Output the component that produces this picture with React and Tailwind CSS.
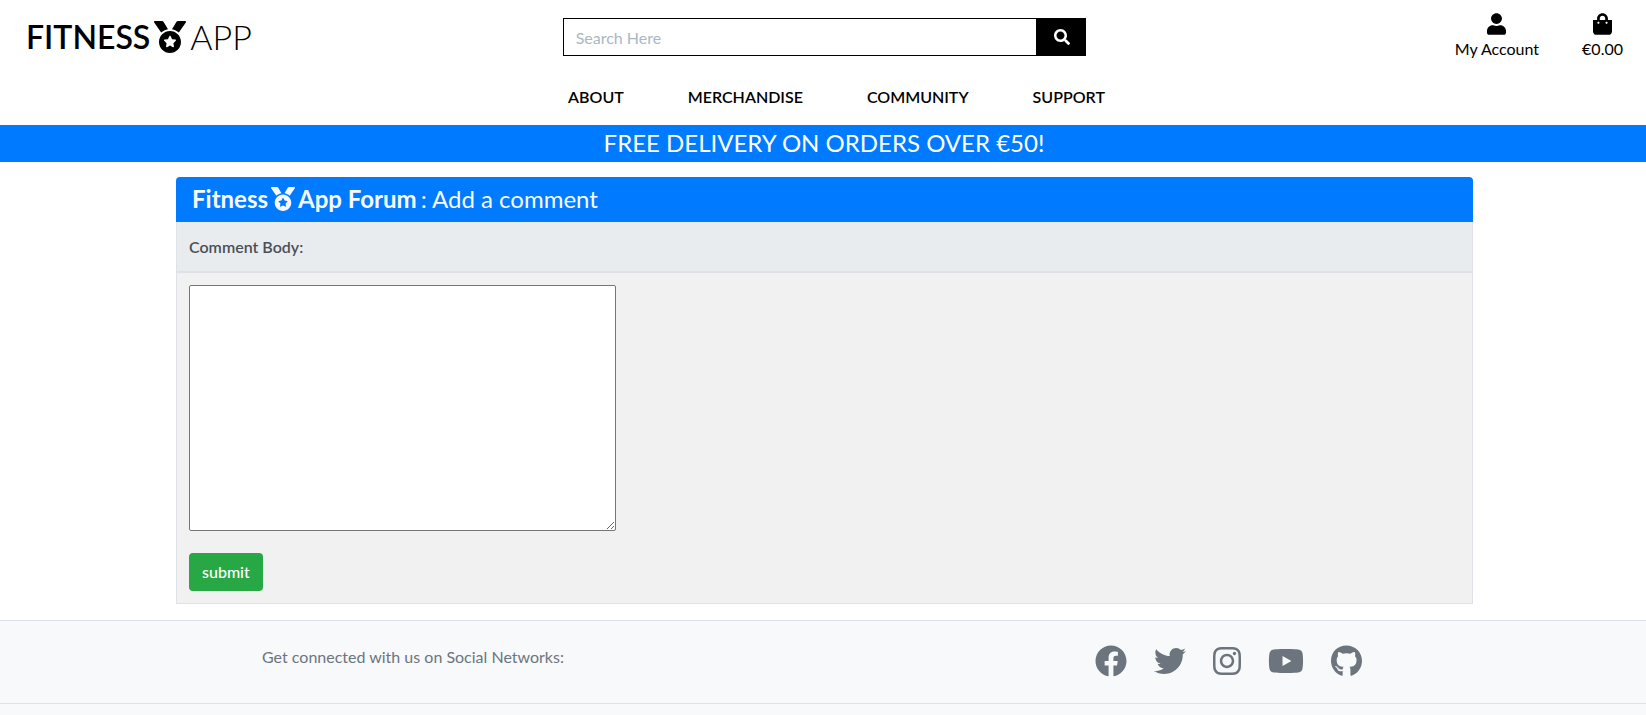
import {
  FaMedal,
  FaSearch,
  FaUser,
  FaShoppingBag,
  FaFacebook,
  FaTwitter,
  FaInstagram,
  FaYoutube,
  FaGithub,
} from "react-icons/fa";

const navItems = ["ABOUT", "MERCHANDISE", "COMMUNITY", "SUPPORT"];

const socials = [
  { label: "Facebook", Icon: FaFacebook, size: "w-8 h-8" },
  { label: "Twitter", Icon: FaTwitter, size: "w-8 h-8" },
  { label: "Instagram", Icon: FaInstagram, size: "w-7 h-8" },
  { label: "YouTube", Icon: FaYoutube, size: "w-9 h-8" },
  { label: "GitHub", Icon: FaGithub, size: "w-[31px] h-8" },
];

function Header() {
  return (
    <header className="text-black">
      <div className="grid grid-cols-3 items-start">
        <a href="#" className="flex items-center pl-[26px] pt-[14px] text-[32px] leading-[46px]">
          <span className="font-semibold">FITNESS</span>
          <FaMedal className="mx-1 size-8" />
          <span className="text-[34px] font-light">APP</span>
        </a>
        <form className="ml-[14px] mr-[11px] mt-[18px] flex h-[38px]" onSubmit={(e) => e.preventDefault()}>
          <input
            type="text"
            aria-label="Search"
            placeholder="Search Here"
            className="min-w-0 flex-1 border border-black px-3 pt-[2px] text-base outline-none placeholder:text-[#aab7c4]"
          />
          <button type="submit" aria-label="Search" className="flex w-[49px] items-center justify-center bg-black text-white">
            <FaSearch className="size-4" />
          </button>
        </form>
        <div className="flex justify-end gap-[43px] pr-[23px] pt-[13px] text-base leading-6">
          <a href="#" className="flex flex-col items-center">
            <FaUser className="h-[22px] w-[19px]" />
            <span className="pt-[2px]">My Account</span>
          </a>
          <a href="#" className="flex flex-col items-center">
            <FaShoppingBag className="h-[22px] w-[19px]" />
            <span className="pt-[2px]">€0.00</span>
          </a>
        </div>
      </div>
      <nav className="flex justify-center gap-16 pb-4 pl-[27px] pt-6 text-base font-semibold leading-6">
        {navItems.map((item) => (
          <a key={item} href="#">
            {item}
          </a>
        ))}
      </nav>
      <div className="bg-[#007bff] pb-[5px] pt-[3px] pl-[2px] text-center text-2xl leading-[29px] text-white">
        FREE DELIVERY ON ORDERS OVER €50!
      </div>
    </header>
  );
}

function CommentForm() {
  return (
    <main className="pb-4 pl-44 pr-[173px] pt-[15px]">
      <h1 className="flex items-center rounded-t bg-[#007bff] px-4 pb-px text-2xl leading-[44px] text-[#f8f9fa]">
        <span className="font-bold">Fitness</span>
        <FaMedal className="mx-[3px] size-6" />
        <span className="font-bold">App Forum</span>
        <span className="pl-1">: Add a comment</span>
      </h1>
      <form className="border border-t-0 border-[#dee2e6] bg-[#f1f1f1]" onSubmit={(e) => e.preventDefault()}>
        <div className="border-b-2 border-[#dee2e6] bg-[#e9ecef] p-3 pt-[13px] font-semibold leading-6 text-[#495057]">
          <label htmlFor="comment">Comment Body:</label>
        </div>
        <div className="flex flex-col items-start gap-[22px] p-3">
          <textarea id="comment" className="h-[246px] w-[427px] rounded-[2px] border border-[#767676] bg-white p-[2px]" />
          <button type="submit" className="rounded bg-[#28a745] px-[13px] py-[7px] text-base font-medium leading-6 text-white">
            submit
          </button>
        </div>
      </form>
    </main>
  );
}

function Footer() {
  return (
    <footer className="min-h-24 flex-1 border-t border-[#dee2e6] bg-[#f8f9fa] text-[#6c757d]">
      <div className="flex items-start justify-between border-b border-[#dee2e6] pb-[26px] pl-[262px] pr-[284px] pt-6">
        <span className="text-base leading-6">Get connected with us on Social Networks:</span>
        <div className="flex gap-[27px]">
          {socials.map(({ label, Icon, size }) => (
            <a key={label} href="#" aria-label={label}>
              <Icon className={size} />
            </a>
          ))}
        </div>
      </div>
    </footer>
  );
}

export default function App() {
  return (
    <div className="flex min-h-screen flex-col bg-white font-[Lato,sans-serif]">
      <Header />
      <CommentForm />
      <Footer />
    </div>
  );
}
